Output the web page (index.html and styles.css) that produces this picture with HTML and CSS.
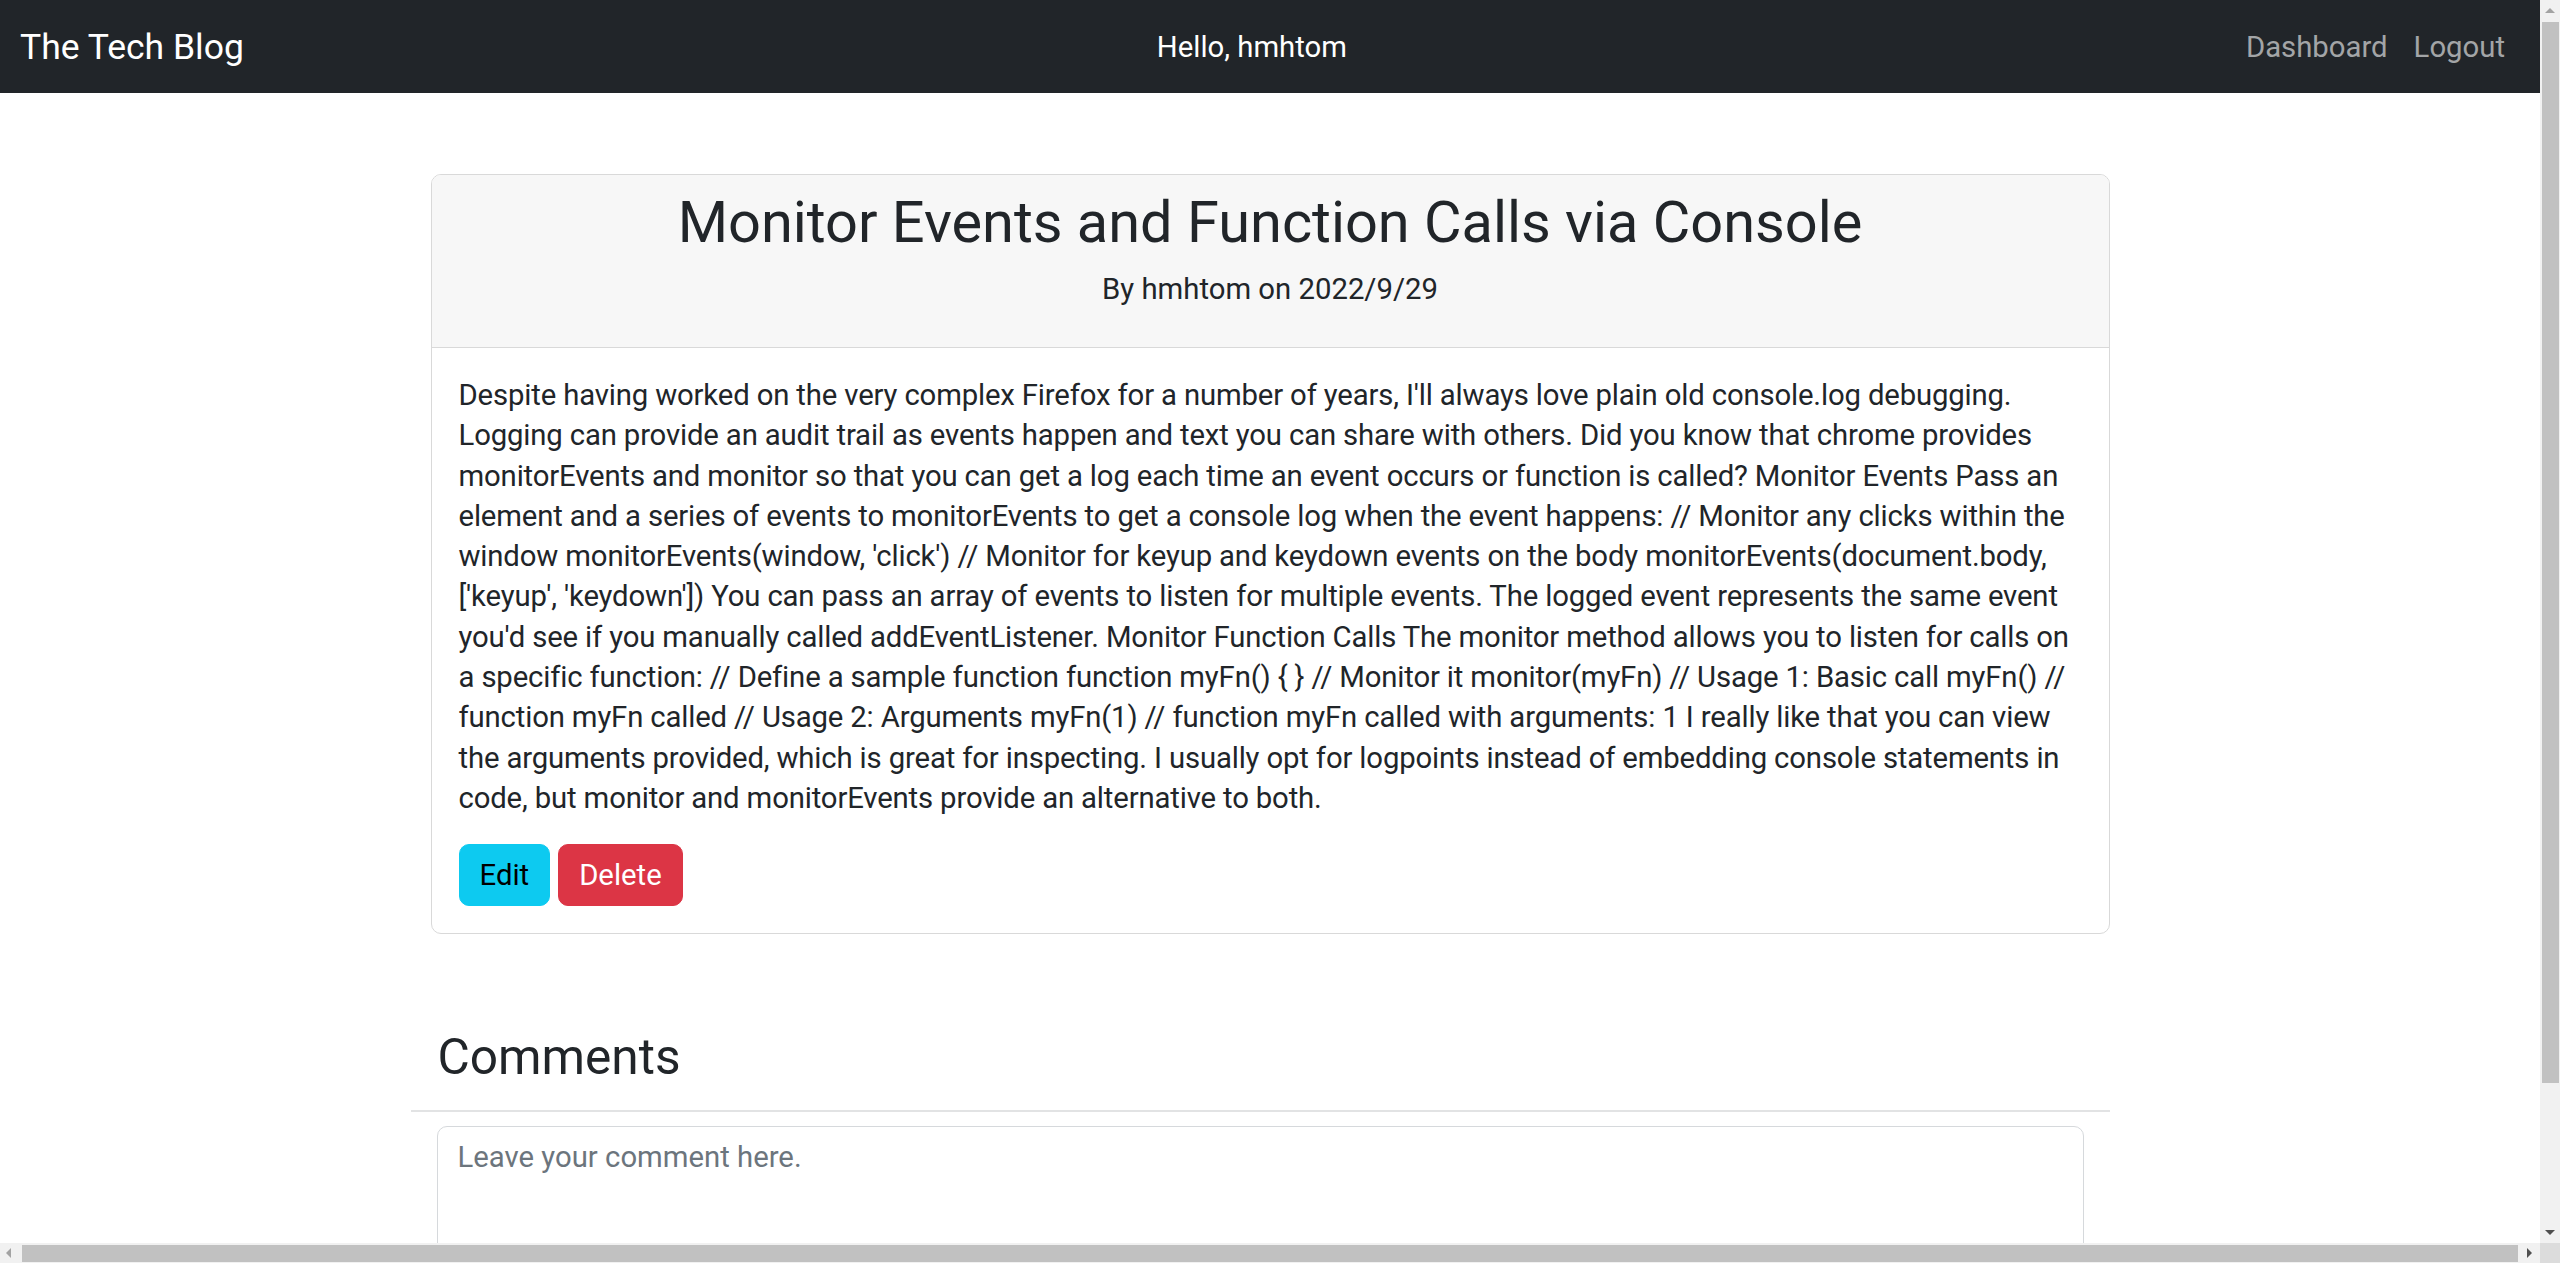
FILE: index.html
```html
<!DOCTYPE html>
<html lang="en">
<head>
<meta charset="utf-8">
<title>The Tech Blog</title>
<link rel="stylesheet" href="styles.css">
</head>
<body>
<div class="page">
  <nav class="navbar">
    <a class="brand" href="#">The Tech Blog</a>
    <span class="greeting">Hello, hmhtom</span>
    <div class="nav-links">
      <a class="nav-link" href="#">Dashboard</a>
      <a class="nav-link" href="#">Logout</a>
    </div>
  </nav>

  <main class="container">
    <article class="card">
      <header class="card-header">
        <h1 class="post-title">Monitor Events and Function Calls via Console</h1>
        <p class="post-meta">By hmhtom on 2022/9/29</p>
      </header>
      <div class="card-body">
        <p class="post-content">Despite having worked on the very complex Firefox for a number of years, I'll always love plain old console.log debugging.<br>
Logging can provide an audit trail as events happen and text you can share with others. Did you know that chrome provides<br>
monitorEvents and monitor so that you can get a log each time an event occurs or function is called? Monitor Events Pass an<br>
element and a series of events to monitorEvents to get a console log when the event happens: // Monitor any clicks within the<br>
window monitorEvents(window, 'click') // Monitor for keyup and keydown events on the body monitorEvents(document.body,<br>
['keyup', 'keydown']) You can pass an array of events to listen for multiple events. The logged event represents the same event<br>
you'd see if you manually called addEventListener. Monitor Function Calls The monitor method allows you to listen for calls on<br>
a specific function: // Define a sample function function myFn() { } // Monitor it monitor(myFn) // Usage 1: Basic call myFn() //<br>
function myFn called // Usage 2: Arguments myFn(1) // function myFn called with arguments: 1 I really like that you can view<br>
the arguments provided, which is great for inspecting. I usually opt for logpoints instead of embedding console statements in<br>
code, but monitor and monitorEvents provide an alternative to both.</p>
        <div class="actions">
          <button class="btn btn-info" type="button">Edit</button>
          <button class="btn btn-danger" type="button">Delete</button>
        </div>
      </div>
    </article>

    <section class="comments">
      <h2 class="comments-title">Comments</h2>
      <hr class="divider">
      <form class="comment-form">
        <textarea class="form-control" placeholder="Leave your comment here."></textarea>
      </form>
    </section>
  </main>
</div>

<div class="scrollbar-v">
  <span class="arrow arrow-up"></span>
  <span class="thumb-v"></span>
  <span class="arrow arrow-down"></span>
</div>
<div class="scrollbar-h">
  <span class="arrow arrow-left"></span>
  <span class="thumb-h"></span>
  <span class="arrow arrow-right"></span>
</div>
<div class="scroll-corner"></div>
</body>
</html>
```

FILE: styles.css
```css
* { box-sizing: border-box; }

html, body {
  margin: 0;
  padding: 0;
  overflow: hidden;
  background: #fff;
}

body {
  font-family: Roboto, "Noto Sans", "Liberation Sans", sans-serif;
  font-size: 29.3px;
  line-height: 44px;
  color: #212529;
}

.page {
  width: 2540px;
  height: 1243px;
  overflow: hidden;
}

/* ---------- navbar ---------- */
.navbar {
  height: 93px;
  background: #212529;
  display: flex;
  align-items: center;
  justify-content: space-between;
  padding: 0 22px 0 20px;
}

.brand {
  color: #fff;
  text-decoration: none;
  font-size: 35.5px;
  line-height: 50px;
  margin-right: 27px;
}

.greeting {
  color: #fff;
  font-size: 29.3px;
  line-height: 44px;
}

.nav-links {
  display: flex;
}

.nav-link {
  color: #a3a5a7;
  text-decoration: none;
  font-size: 29.3px;
  line-height: 44px;
  padding: 0 13px;
}

/* ---------- post card ---------- */
.container {
  width: 1679px;
  margin: 81px auto 0;
}

.card {
  border: 1px solid #d9d9d9;
  border-radius: 10px;
  overflow: hidden;
  background: #fff;
}

.card-header {
  background: #f7f7f7;
  border-bottom: 1px solid #d9d9d9;
  text-align: center;
  padding: 11px 27px 36px;
}

.post-title {
  margin: 0;
  font-size: 57.7px;
  line-height: 72px;
  font-weight: 400;
}

.post-meta {
  margin: 9px 0 0;
  font-size: 29.3px;
  line-height: 44px;
}

.card-body {
  padding: 27px 27px 27px;
}

.post-content {
  margin: 0 0 26px;
  font-size: 29.3px;
  line-height: 40.3px;
  letter-spacing: -0.15px;
}

.actions {
  display: flex;
  gap: 8px;
}

.btn {
  font-family: inherit;
  font-size: 29.3px;
  line-height: 40px;
  padding: 10px 20px;
  border: 1px solid transparent;
  border-radius: 10px;
  cursor: pointer;
}

.btn-info {
  background: #0dcaf0;
  border-color: #0dcaf0;
  color: #000;
}

.btn-danger {
  background: #dc3545;
  border-color: #dc3545;
  color: #fff;
}

/* ---------- comments ---------- */
.comments {
  margin-left: -20px;
  width: 1699px;
  padding-top: 90px;
}

.comments-title {
  margin: 0;
  padding-left: 27px;
  font-size: 49.6px;
  line-height: 67px;
  font-weight: 400;
}

.divider {
  margin: 19px 0 14px;
  border: 0;
  border-top: 2px solid #e2e3e4;
}

.comment-form {
  padding: 0 26px;
}

.form-control {
  display: block;
  width: 100%;
  height: 240px;
  font-family: inherit;
  font-size: 29.3px;
  line-height: 40px;
  color: #212529;
  padding: 10px 20px;
  border: 1px solid #d6d9dc;
  border-radius: 10px;
  resize: none;
}

.form-control::placeholder {
  color: #6c757d;
}

/* ---------- browser scrollbars ---------- */
.scrollbar-v {
  position: fixed;
  top: 0;
  right: 0;
  width: 20px;
  height: 1243px;
  background: #f1f1f1;
}

.thumb-v {
  position: absolute;
  top: 22px;
  left: 2px;
  width: 17px;
  height: 1061px;
  background: #c1c1c1;
}

.scrollbar-h {
  position: fixed;
  left: 0;
  bottom: 0;
  width: 2540px;
  height: 20px;
  background: #f1f1f1;
}

.thumb-h {
  position: absolute;
  top: 2px;
  left: 22px;
  width: 2496px;
  height: 17px;
  background: #c1c1c1;
}

.scroll-corner {
  position: fixed;
  right: 0;
  bottom: 0;
  width: 20px;
  height: 20px;
  background: #dcdcdc;
}

.arrow {
  position: absolute;
  width: 0;
  height: 0;
  border-style: solid;
}

.arrow-up {
  top: 8px;
  left: 5px;
  border-width: 0 5px 5px 5px;
  border-color: transparent transparent #a3a3a3 transparent;
}

.arrow-down {
  bottom: 8px;
  left: 5px;
  border-width: 5px 5px 0 5px;
  border-color: #505050 transparent transparent transparent;
}

.arrow-left {
  left: 6px;
  top: 5px;
  border-width: 5px 5px 5px 0;
  border-color: transparent #a3a3a3 transparent transparent;
}

.arrow-right {
  right: 8px;
  top: 5px;
  border-width: 5px 0 5px 5px;
  border-color: transparent transparent transparent #505050;
}
```
